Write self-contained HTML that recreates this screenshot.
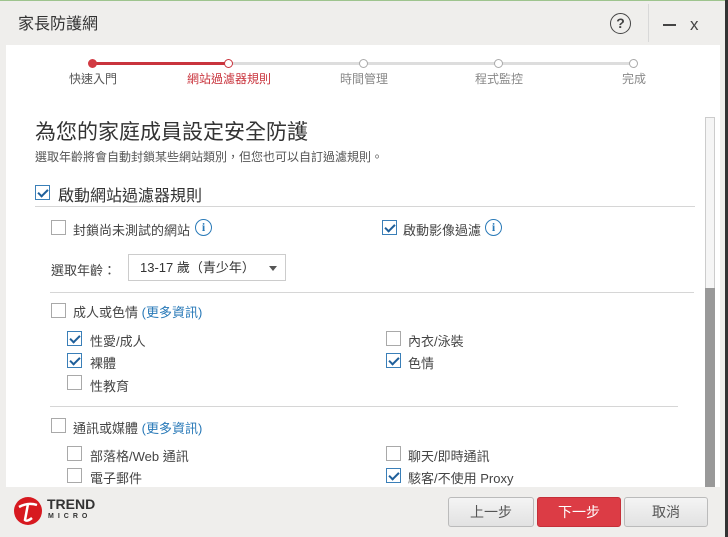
<!DOCTYPE html><html><head><meta charset="utf-8"><style>
*{margin:0;padding:0;box-sizing:border-box}
body{width:728px;height:537px;overflow:hidden;background:#efeeec;font-family:"Liberation Sans","Noto Sans CJK TC",sans-serif;color:#333;position:relative}
.a{position:absolute;white-space:nowrap}
.cb{position:absolute;width:15px;height:15px;border:1px solid #a9a9a9;background:#fff}
.cb.on{border-color:#3a7fb8}
.cb.on::after{content:"";position:absolute;left:4px;top:1px;width:4px;height:8px;border:solid #1f5f9a;border-width:0 2px 2px 0;transform:rotate(45deg)}
.t{font-size:13px;color:#444}
.hr{position:absolute;height:1px;background:#d6d6d6}
.dot{position:absolute;width:9px;height:9px;border-radius:50%;border:1px solid #aaa;background:#fff;top:59px}
.lbl{position:absolute;top:70px;font-size:12px;color:#888;transform:translateX(-50%)}
.info{position:absolute;width:17px;height:17px;border:1.5px solid #2a7ab8;border-radius:50%;color:#2a7ab8;font:bold 12px "Liberation Serif",serif;text-align:center;line-height:14px}
.btn{position:absolute;top:497px;height:30px;border:1px solid #bbb;border-radius:3px;background:linear-gradient(#f4f4f4,#e2e2e2);font-size:14px;color:#555;text-align:center;line-height:28px}
a{color:#2a7ab8;text-decoration:none}
</style></head><body>
<div class="a" style="left:0;top:0;width:728px;height:1px;background:#9ec48e"></div>
<div class="a" style="left:18px;top:10px;font-size:16px;color:#333">家長防護網</div>
<div class="a" style="left:610px;top:13px;width:21px;height:21px;border:1.5px solid #444;border-radius:50%;text-align:center;font:bold 14px/18px 'Liberation Sans';color:#444">?</div>
<div class="a" style="left:648px;top:4px;width:1px;height:38px;background:#d8d8d8"></div>
<div class="a" style="left:663px;top:24px;width:13px;height:2px;background:#444"></div>
<div class="a" style="left:690px;top:15px;font:17px 'Liberation Sans';color:#444">x</div>
<div class="a" style="left:6px;top:45px;width:714px;height:442px;background:#fff"></div>
<div class="a" style="left:93px;top:62px;width:136px;height:3px;background:#c9343d"></div>
<div class="a" style="left:229px;top:62px;width:404px;height:3px;background:#ddd"></div>
<div class="dot" style="left:88px;background:#d23a43;border-color:#d23a43"></div>
<div class="dot" style="left:224px;border-color:#c9343d"></div>
<div class="dot" style="left:359px"></div><div class="dot" style="left:494px"></div><div class="dot" style="left:629px"></div>
<div class="lbl" style="left:93px;color:#555">快速入門</div>
<div class="lbl" style="left:229px;color:#c9343d">網站過濾器規則</div>
<div class="lbl" style="left:364px">時間管理</div>
<div class="lbl" style="left:499px">程式監控</div>
<div class="lbl" style="left:634px">完成</div>
<div class="a" style="left:705px;top:117px;width:10px;height:370px;border:1px solid #ccc;background:#f5f5f5"></div>
<div class="a" style="left:705px;top:288px;width:10px;height:199px;background:#999"></div>
<div class="a" style="left:35px;top:116px;font-size:21px;color:#333">為您的家庭成員設定安全防護</div>
<div class="a" style="left:35px;top:148px;font-size:12px;color:#555">選取年齡將會自動封鎖某些網站類別，但您也可以自訂過濾規則。</div>
<div class="cb on" style="left:35px;top:185px"></div>
<div class="a" style="left:58px;top:182px;font-size:16px;color:#333">啟動網站過濾器規則</div>
<div class="hr" style="left:35px;top:206px;width:660px"></div>
<div class="cb" style="left:51px;top:220px"></div><div class="a t" style="left:73px;top:220px">封鎖尚未測試的網站</div><div class="info" style="left:195px;top:219px">i</div>
<div class="cb on" style="left:382px;top:220px"></div><div class="a t" style="left:403px;top:220px">啟動影像過濾</div><div class="info" style="left:485px;top:219px">i</div>
<div class="a t" style="left:51px;top:260px">選取年齡：</div>
<div class="a" style="left:128px;top:254px;width:158px;height:27px;border:1px solid #ccc;font-size:13px;line-height:25px;padding-left:11px;color:#333">13-17 歲（青少年）</div>
<div class="a" style="left:269px;top:266px;border:4px solid transparent;border-top:5px solid #555"></div>
<div class="hr" style="left:50px;top:292px;width:644px"></div>
<div class="cb" style="left:51px;top:303px"></div><div class="a t" style="left:73px;top:302px">成人或色情 <a>(更多資訊)</a></div>
<div class="cb on" style="left:67px;top:331px"></div><div class="a t" style="left:90px;top:331px">性愛/成人</div>
<div class="cb on" style="left:67px;top:353px"></div><div class="a t" style="left:90px;top:353px">裸體</div>
<div class="cb" style="left:67px;top:375px"></div><div class="a t" style="left:90px;top:376px">性教育</div>
<div class="cb" style="left:386px;top:331px"></div><div class="a t" style="left:408px;top:331px">內衣/泳裝</div>
<div class="cb on" style="left:386px;top:353px"></div><div class="a t" style="left:408px;top:353px">色情</div>
<div class="hr" style="left:50px;top:406px;width:628px"></div>
<div class="cb" style="left:51px;top:418px"></div><div class="a t" style="left:73px;top:418px">通訊或媒體 <a>(更多資訊)</a></div>
<div class="cb" style="left:67px;top:446px"></div><div class="a t" style="left:90px;top:446px">部落格/Web 通訊</div>
<div class="cb" style="left:67px;top:468px"></div><div class="a t" style="left:90px;top:468px">電子郵件</div>
<div class="cb" style="left:386px;top:446px"></div><div class="a t" style="left:408px;top:446px">聊天/即時通訊</div>
<div class="cb on" style="left:386px;top:468px"></div><div class="a t" style="left:408px;top:468px">駭客/不使用 Proxy</div>
<svg class="a" style="left:13px;top:496px" width="30" height="30" viewBox="0 0 30 30"><circle cx="15" cy="15" r="14" fill="#d71920"/><path d="M6 11 Q15 6 24 9 M15 8 L12 24 Q14 26 19 22" stroke="#fff" stroke-width="2.5" fill="none"/></svg>
<div class="a" style="left:47px;top:496px;font:bold 14px 'Liberation Sans';color:#333">TREND</div>
<div class="a" style="left:48px;top:513px;font:bold 7px 'Liberation Sans';color:#333;letter-spacing:4px">MICRO</div>
<div class="btn" style="left:448px;width:86px">上一步</div>
<div class="btn" style="left:537px;width:84px;background:#dc3c45;border-color:#c52f38;color:#fff">下一步</div>
<div class="btn" style="left:624px;width:84px">取消</div>
<div class="a" style="left:725px;top:0;width:3px;height:537px;background:#333"></div>
</body></html>
